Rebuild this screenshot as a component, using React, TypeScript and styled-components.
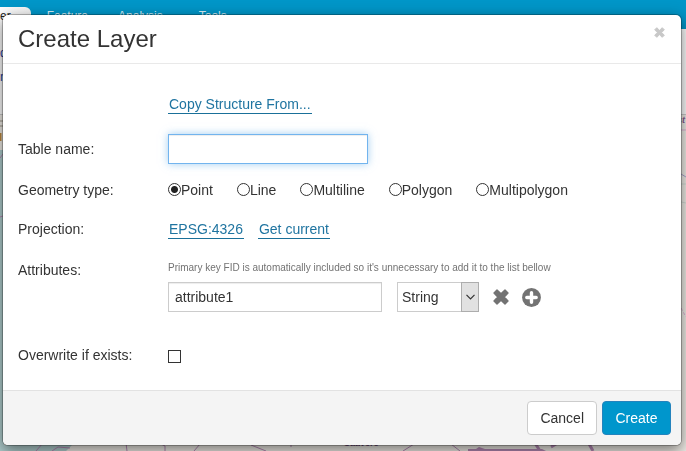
import React, { useState } from "react";
import styled, { createGlobalStyle } from "styled-components";

const GlobalStyle = createGlobalStyle`
  *, *::before, *::after { box-sizing: border-box; }
  html, body, #root { height: 100%; }
  body {
    margin: 0;
    overflow: hidden;
    font-family: "Liberation Sans", Arial, sans-serif;
    font-size: 14px;
    line-height: 20px;
    color: #333;
  }
  button, input, select { font: inherit; color: inherit; }
`;

const Page = styled.div`
  display: flex;
  flex-direction: column;
  min-height: 100%;
  background: #fff;
`;

const NavBar = styled.nav`
  display: flex;
  align-items: flex-start;
  height: 29px;
  padding-top: 7px;
  background: #0096c8;
`;

const NavTab = styled.a<{ $active?: boolean; $space?: number }>`
  height: 22px;
  margin-right: ${(p) => p.$space ?? 0}px;
  padding-right: ${(p) => (p.$active ? 20 : 0)}px;
  border-radius: 0 6px 0 0;
  background: ${(p) => (p.$active ? "linear-gradient(90deg, #fff, #f2f2f2)" : "transparent")};
  color: ${(p) => (p.$active ? "#222" : "#d9eff7")};
  font-size: 12px;
  line-height: 18px;
  text-decoration: none;
`;

const Tools = styled.div`
  display: flex;
  flex-direction: column;
  height: 86px;
  padding-top: 14px;
  gap: 4px;
  border-bottom: 1px solid #ccc;
  font-size: 12px;
  color: #2b3f9b;
`;

const MapArea = styled.div`
  display: flex;
  flex: 1;
  background: #f2efe9;
`;

const MapDrawing = styled.svg`
  display: block;
  width: 100%;
  height: 336px;
`;

const Overlay = styled.div`
  position: fixed;
  inset: 0;
  padding: 14px 4px 5px 2px;
`;

const Dialog = styled.form`
  border: 1px solid rgba(0, 0, 0, 0.25);
  border-radius: 6px;
  background: #fff;
  background-clip: padding-box;
  box-shadow: 0 5px 15px rgba(0, 0, 0, 0.5);
  overflow: hidden;
`;

const Header = styled.header`
  display: flex;
  justify-content: space-between;
  align-items: flex-start;
  height: 49px;
  padding: 8px 15px 0;
  border-bottom: 1px solid #e9e9e9;
`;

const Title = styled.h1`
  margin: 0;
  font-size: 24px;
  font-weight: 400;
  line-height: 32px;
`;

const IconButton = styled.button<{ $tone?: string }>`
  display: flex;
  padding: 0;
  border: 0;
  background: none;
  color: ${(p) => p.$tone ?? "#737373"};
  cursor: pointer;
`;

const CloseButton = styled(IconButton)`
  padding: 4px 1px;
`;

const Body = styled.div`
  display: grid;
  grid-template-columns: 150px 1fr;
  padding: 31px 15px 25px;
`;

const Row = styled.div<{ $space?: number; $align?: string }>`
  display: grid;
  grid-column: 1 / -1;
  grid-template-columns: subgrid;
  align-items: ${(p) => p.$align ?? "center"};
  margin-bottom: ${(p) => p.$space ?? 0}px;
`;

const Label = styled.label`
  grid-column: 1;
`;

const Controls = styled.div<{ $gap?: number }>`
  display: flex;
  grid-column: 2;
  align-items: center;
  gap: ${(p) => p.$gap ?? 14}px;
`;

const Link = styled.a`
  padding: 0 1px;
  border-bottom: 1px solid #1a7099;
  color: #1f74a0;
  line-height: 18px;
  text-decoration: none;
`;

const TextInput = styled.input<{ $width: number; $glow?: boolean }>`
  width: ${(p) => p.$width}px;
  height: 30px;
  padding: 4px 6px;
  border: 1px solid ${(p) => (p.$glow ? "#72b4ee" : "#ccc")};
  border-radius: 0;
  outline: none;
  background: #fff;
  box-shadow: inset 0 1px 1px rgba(0, 0, 0, 0.075)
    ${(p) => (p.$glow ? ", 0 0 8px rgba(102, 175, 233, 0.6)" : "")};
`;

const Choice = styled.label`
  display: flex;
  align-items: center;
  white-space: nowrap;
`;

const Radio = styled.input`
  appearance: none;
  width: 13px;
  height: 13px;
  margin: 0 0 2px;
  border: 1px solid #333;
  border-radius: 50%;
  background: #fff;
  &:checked {
    background: radial-gradient(circle, #222 0 3px, #fff 4px);
  }
`;

const Checkbox = styled.input`
  appearance: none;
  width: 13px;
  height: 13px;
  margin: 2px 0 0;
  border: 1px solid #333;
  background: #fff;
  &:checked {
    background: #333;
    box-shadow: inset 0 0 0 2px #fff;
  }
`;

const Hint = styled.small`
  display: block;
  margin-bottom: 6px;
  color: #737373;
  font-size: 10px;
  line-height: 16px;
`;

const AttributeRow = styled.div`
  display: flex;
  align-items: center;
`;

const SelectBox = styled.div`
  display: grid;
  width: 82px;
  height: 30px;
  margin: 0 14px 0 15px;
`;

const Select = styled.select`
  grid-area: 1 / 1;
  appearance: none;
  padding: 0 20px 0 4px;
  border: 1px solid #ccc;
  border-radius: 0;
  background: #fff;
`;

const SelectArrow = styled.span`
  display: flex;
  grid-area: 1 / 1;
  justify-self: end;
  align-items: center;
  justify-content: center;
  width: 18px;
  border: 1px solid #adadad;
  background: #e1e1e1;
  pointer-events: none;
`;

const AddButton = styled(IconButton)`
  margin-left: 13px;
`;

const Footer = styled.footer`
  display: flex;
  justify-content: flex-end;
  gap: 5px;
  padding: 10px;
  border-top: 1px solid #e2e2e2;
  background: #f4f4f4;
`;

const Button = styled.button<{ $primary?: boolean }>`
  min-width: 69px;
  height: 34px;
  padding: 0 12px;
  border: 1px solid ${(p) => (p.$primary ? "#2483bd" : "#ccc")};
  border-radius: 4px;
  background: ${(p) => (p.$primary ? "#0096cc" : "#fff")};
  color: ${(p) => (p.$primary ? "#fff" : "#333")};
`;

const Cross = ({ size }: { size: number }) => (
  <svg width={size} height={size} viewBox="0 0 16 16" aria-hidden="true">
    <path
      d="M4 1 8 4.8 12 1 15 4 11.2 8 15 12 12 15 8 11.2 4 15 1 12 4.8 8 1 4z"
      fill="currentColor"
      stroke="currentColor"
      strokeWidth="1.4"
      strokeLinejoin="round"
    />
  </svg>
);

const PlusCircle = () => (
  <svg width="19" height="19" viewBox="0 0 19 19" aria-hidden="true">
    <circle cx="9.5" cy="9.5" r="9.4" fill="currentColor" />
    <path d="M9.5 4.8v9.4M4.8 9.5h9.4" stroke="#fff" strokeWidth="3.4" strokeLinecap="round" />
  </svg>
);

const MapBackground = () => (
  <MapArea>
    <MapDrawing viewBox="0 0 686 336" preserveAspectRatio="none" aria-hidden="true">
      <rect width="686" height="336" fill="#f2efe9" />
      <path d="M0 35H4V330H72L66 336H0z" fill="#b2d0d0" />
      <path d="M0 6h3M0 11h3" stroke="#c8c3b8" strokeWidth="2" />
      <path d="M0 18v8" stroke="#c08a3c" strokeWidth="3" />
      <g fill="none" stroke="#b58ab5">
        <path d="M0 43l3-4M0 102l3-1M36 336l7-8M52 336l6-4 12 1M126 328l1 8M159 328l6 3v5M194 336l6-7M251 330l15 6M291 329v3M403 336l11-7M451 329l9 7" />
        <path d="M535 328l5 8M551 332l5-3M588 327l5 9" strokeWidth="3" />
        <path d="M681 15h5" stroke="#dfb3d8" />
        <path d="M681 59l5 3" stroke="#aaa5cf" />
        <path d="M681 69h5M681 87l5 1" stroke="#d4ded8" />
        <path d="M681 193l5 9" stroke="#dfb3d8" strokeDasharray="3 2" />
      </g>
      <path d="M468 336v-2h8l3-2 6 2h57l4 2z" fill="#b58ab5" />
      <text x="344" y="331" fontSize="9" fontWeight="700" fill="#6f4b7c">Saavere</text>
      <text x="677" y="8" fontSize="9" fontStyle="italic" fontWeight="700" fill="#8a5c91">st</text>
    </MapDrawing>
  </MapArea>
);

const geometryTypes = ["Point", "Line", "Multiline", "Polygon", "Multipolygon"];

export default function App() {
  const [geometry, setGeometry] = useState("Point");

  return (
    <>
      <GlobalStyle />
      <Page>
        <NavBar>
          <NavTab href="#layer" $active $space={16}>er</NavTab>
          <NavTab href="#feature" $space={30}>Feature</NavTab>
          <NavTab href="#analysis" $space={36}>Analysis</NavTab>
          <NavTab href="#tools">Tools</NavTab>
        </NavBar>
        <Tools>
          <span>d</span>
          <span>n</span>
        </Tools>
        <MapBackground />
      </Page>
      <Overlay>
        <Dialog role="dialog" aria-labelledby="dialog-title" onSubmit={(e) => e.preventDefault()}>
          <Header>
            <Title id="dialog-title">Create Layer</Title>
            <CloseButton type="button" aria-label="Close" $tone="#c8c8c8">
              <Cross size={11} />
            </CloseButton>
          </Header>
          <Body>
            <Row $space={20}>
              <Controls>
                <Link href="#copy">Copy Structure From...</Link>
              </Controls>
            </Row>
            <Row $space={16}>
              <Label htmlFor="table-name">Table name:</Label>
              <Controls>
                <TextInput id="table-name" $width={200} $glow />
              </Controls>
            </Row>
            <Row $space={19} role="radiogroup" aria-labelledby="geometry-label">
              <Label as="span" id="geometry-label">Geometry type:</Label>
              <Controls $gap={24}>
                {geometryTypes.map((name) => (
                  <Choice key={name}>
                    <Radio
                      type="radio"
                      name="geometry"
                      checked={geometry === name}
                      onChange={() => setGeometry(name)}
                    />
                    {name}
                  </Choice>
                ))}
              </Controls>
            </Row>
            <Row $space={21}>
              <Label as="span">Projection:</Label>
              <Controls>
                <Link href="#epsg">EPSG:4326</Link>
                <Link href="#current">Get current</Link>
              </Controls>
            </Row>
            <Row $space={33} $align="start">
              <Label htmlFor="attribute">Attributes:</Label>
              <div>
                <Hint>Primary key FID is automatically included so it's unnecessary to add it to the list bellow</Hint>
                <AttributeRow>
                  <TextInput id="attribute" defaultValue="attribute1" $width={214} />
                  <SelectBox>
                    <Select aria-label="Attribute type" defaultValue="String">
                      <option>String</option>
                      <option>Integer</option>
                      <option>Double</option>
                    </Select>
                    <SelectArrow>
                      <svg width="9" height="6" viewBox="0 0 9 6" aria-hidden="true">
                        <path d="M.5.8l4 4 4-4" fill="none" stroke="#333" strokeWidth="1.2" />
                      </svg>
                    </SelectArrow>
                  </SelectBox>
                  <IconButton type="button" aria-label="Remove attribute">
                    <Cross size={16} />
                  </IconButton>
                  <AddButton type="button" aria-label="Add attribute">
                    <PlusCircle />
                  </AddButton>
                </AttributeRow>
              </div>
            </Row>
            <Row>
              <Label htmlFor="overwrite">Overwrite if exists:</Label>
              <Controls>
                <Checkbox id="overwrite" type="checkbox" />
              </Controls>
            </Row>
          </Body>
          <Footer>
            <Button type="button">Cancel</Button>
            <Button type="submit" $primary>Create</Button>
          </Footer>
        </Dialog>
      </Overlay>
    </>
  );
}
